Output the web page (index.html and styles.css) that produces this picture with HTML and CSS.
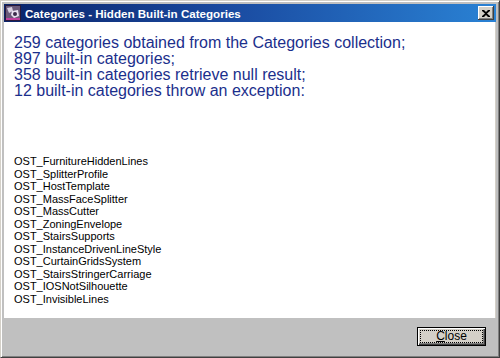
FILE: index.html
```html
<!DOCTYPE html>
<html lang="en">
<head>
<meta charset="UTF-8">
<title>Categories - Hidden Built-in Categories</title>
<link rel="stylesheet" href="styles.css">
</head>
<body>

<div class="window">
  <div class="titlebar">
    <svg class="app-icon" width="16" height="16" viewBox="0 0 16 16">
      <rect x="0" y="0" width="16" height="16" fill="#2a1a3a"/>
      <rect x="1" y="1" width="14" height="14" fill="#6a5a7a"/>
      <path d="M2 3 L7 2 L8 6 L4 8 Z" fill="#d8d0e0"/>
      <path d="M7 6 L13 5 L14 11 L9 13 L6 10 Z" fill="#e8e0f0"/>
      <circle cx="10" cy="9" r="2" fill="#3a2a4a"/>
      <rect x="1" y="13" width="14" height="2" fill="#c040a0"/>
    </svg>
    <span class="title">Categories - Hidden Built-in Categories</span>
    <button class="title-close">
      <svg width="8" height="7" viewBox="0 0 8 7">
        <path d="M0 0h2l2 2 2-2h2v1L5 3.5 8 6v1H6L4 5 2 7H0V6l3-2.5L0 1z" fill="#000"/>
      </svg>
    </button>
  </div>

  <div class="content">
    <div class="summary">
      259 categories obtained from the Categories collection;<br>
      897 built-in categories;<br>
      358 built-in categories retrieve null result;<br>
      12 built-in categories throw an exception:
    </div>
    <div class="list">
      OST_FurnitureHiddenLines<br>
      OST_SplitterProfile<br>
      OST_HostTemplate<br>
      OST_MassFaceSplitter<br>
      OST_MassCutter<br>
      OST_ZoningEnvelope<br>
      OST_StairsSupports<br>
      OST_InstanceDrivenLineStyle<br>
      OST_CurtainGridsSystem<br>
      OST_StairsStringerCarriage<br>
      OST_IOSNotSilhouette<br>
      OST_InvisibleLines
    </div>
  </div>

  <div class="footer">
    <button class="close-button"><span class="focus"><u>C</u>lose</span></button>
  </div>
</div>

</body>
</html>
```

FILE: styles.css
```css
body {
  margin: 0;
  font-family: "Liberation Sans", Arial, sans-serif;
  background: #d4d0c8;
}
.window {
  width: 500px;
  height: 358px;
  box-sizing: border-box;
  display: flex;
  flex-direction: column;
  background: #c0c0c0;
  border-top: 1px solid #d4d0c8;
  border-left: 1px solid #d4d0c8;
  border-right: 1px solid #404040;
  border-bottom: 1px solid #404040;
  box-shadow: inset 1px 1px 0 #fff, inset -1px -1px 0 #808080;
  padding: 3px 3px 2px 3px;
}
.titlebar {
  height: 18px;
  display: flex;
  align-items: center;
  padding: 0 2px 0 1px;
  background: linear-gradient(to right, #0a246a, #1a4aa0 45%, #2a82d4);
}
.app-icon {
  flex: none;
  margin-right: 4px;
}
.title {
  flex: 1;
  color: #fff;
  font-weight: bold;
  font-size: 11.6px;
  white-space: nowrap;
}
.title-close {
  width: 16px;
  height: 14px;
  padding: 0;
  display: flex;
  align-items: center;
  justify-content: center;
  background: #d4d0c8;
  border: none;
  box-shadow: inset -1px -1px 0 #404040, inset 1px 1px 0 #fff, inset -2px -2px 0 #808080;
}
.content {
  background: #fff;
  height: 296px;
  padding: 0 0 0 10px;
  border-right: 1px solid #d4d0c8;
}
.summary {
  color: #1b2f8c;
  font-size: 16px;
  line-height: 16px;
  padding-top: 13px;
}
.list {
  color: #000;
  font-size: 11px;
  line-height: 12.5px;
  margin-top: 56px;
}
.footer {
  flex: 1;
  display: flex;
  justify-content: flex-end;
  align-items: center;
  padding-right: 10px;
  background: #c0c0c0;
}
.close-button {
  width: 69px;
  height: 19px;
  padding: 2px;
  background: #d4d0c8;
  border: 1px solid #000;
  box-shadow: inset 1px 1px 0 #fff, inset -1px -1px 0 #404040, inset -2px -2px 0 #808080;
  font-family: "Liberation Sans", Arial, sans-serif;
  font-size: 12px;
}
.focus {
  display: block;
  height: 11px;
  line-height: 11px;
  border: 1px dotted #000;
}
```
